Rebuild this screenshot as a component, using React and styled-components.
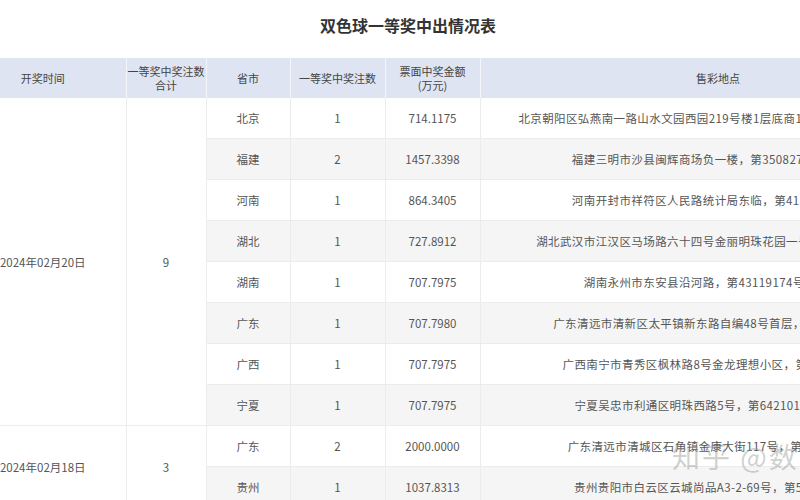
import styled, { createGlobalStyle } from "styled-components";

const Global = createGlobalStyle`
  body { margin: 0; background: #fff; font-family: "Microsoft YaHei", "Noto Sans CJK SC", sans-serif; overflow: hidden; }
`;

const Page = styled.div`
  width: 800px;
  height: 500px;
  overflow: hidden;
  position: relative;
`;

const Title = styled.h1`
  margin: 0;
  height: 50px;
  line-height: 50px;
  text-align: center;
  font-size: 16px;
  font-weight: bold;
  color: #333;
  padding-left: 16px;
`;

const Table = styled.table`
  margin: 8px 0 0 -40px;
  border-collapse: collapse;
  table-layout: fixed;
  width: 996px;
  font-size: 11.5px;
  color: #555;
`;

const Th = styled.th`
  background: #dfe4f2;
  font-weight: normal;
  font-size: 11px;
  color: #444;
  height: 40px;
  line-height: 14px;
  border-right: 1px solid #f4f5f9;
  padding: 0;
  white-space: nowrap;
`;

const Td = styled.td`
  height: 40px;
  padding: 0;
  text-align: center;
  background: ${(p) => (p.$alt ? "#f5f5f5" : "#fff")};
  border-right: 1px solid #ececec;
  border-bottom: 1px solid #ececec;
  white-space: nowrap;
  overflow: hidden;
  letter-spacing: ${(p) => (p.$wide ? "0.4px" : "0")};
`;

const Watermark = styled.div`
  position: absolute;
  left: 672px;
  top: 436px;
  font-size: 28px;
  color: rgba(150, 150, 150, 0.45);
  white-space: nowrap;
  letter-spacing: 2px;
`;

const groups = [
  {
    date: "2024年02月20日",
    total: 9,
    rows: [
      ["北京", 1, "714.1175", "北京朝阳区弘燕南一路山水文园西园219号楼1层底商101内，第11010999号"],
      ["福建", 2, "1457.3398", "福建三明市沙县闽辉商场负一楼，第35082778号投注站"],
      ["河南", 1, "864.3405", "河南开封市祥符区人民路统计局东临，第41520104号站"],
      ["湖北", 1, "727.8912", "湖北武汉市江汉区马场路六十四号金丽明珠花园一号，第42010789号"],
      ["湖南", 1, "707.7975", "湖南永州市东安县沿河路，第43119174号销售网点"],
      ["广东", 1, "707.7980", "广东清远市清新区太平镇新东路自编48号首层，第44180123号"],
      ["广西", 1, "707.7975", "广西南宁市青秀区枫林路8号金龙理想小区，第45012056号"],
      ["宁夏", 1, "707.7975", "宁夏吴忠市利通区明珠西路5号，第64210168号投注站"],
    ],
  },
  {
    date: "2024年02月18日",
    total: 3,
    rows: [
      ["广东", 2, "2000.0000", "广东清远市清城区石角镇金康大街117号，第44190401号"],
      ["贵州", 1, "1037.8313", "贵州贵阳市白云区云城尚品A3-2-69号，第52015288号"],
    ],
  },
];

export default function App() {
  let idx = 0;
  return (
    <Page>
      <Global />
      <Title>双色球一等奖中出情况表</Title>
      <Table>
        <colgroup>
          <col style={{ width: 166 }} />
          <col style={{ width: 80 }} />
          <col style={{ width: 84 }} />
          <col style={{ width: 95 }} />
          <col style={{ width: 95 }} />
          <col style={{ width: 476 }} />
        </colgroup>
        <thead>
          <tr>
            <Th>开奖时间</Th>
            <Th>一等奖中奖注数<br />合计</Th>
            <Th>省市</Th>
            <Th>一等奖中奖注数</Th>
            <Th>票面中奖金额<br />(万元)</Th>
            <Th>售彩地点</Th>
          </tr>
        </thead>
        <tbody>
          {groups.map((g) =>
            g.rows.map((r, i) => {
              const alt = idx++ % 2 === 1;
              return (
                <tr key={g.date + i}>
                  {i === 0 && <Td rowSpan={g.rows.length}>{g.date}</Td>}
                  {i === 0 && <Td rowSpan={g.rows.length}>{g.total}</Td>}
                  <Td $alt={alt}>{r[0]}</Td>
                  <Td $alt={alt}>{r[1]}</Td>
                  <Td $alt={alt}>{r[2]}</Td>
                  <Td $alt={alt} $wide>{r[3]}</Td>
                </tr>
              );
            })
          )}
        </tbody>
      </Table>
      <Watermark>知乎 @数</Watermark>
    </Page>
  );
}
